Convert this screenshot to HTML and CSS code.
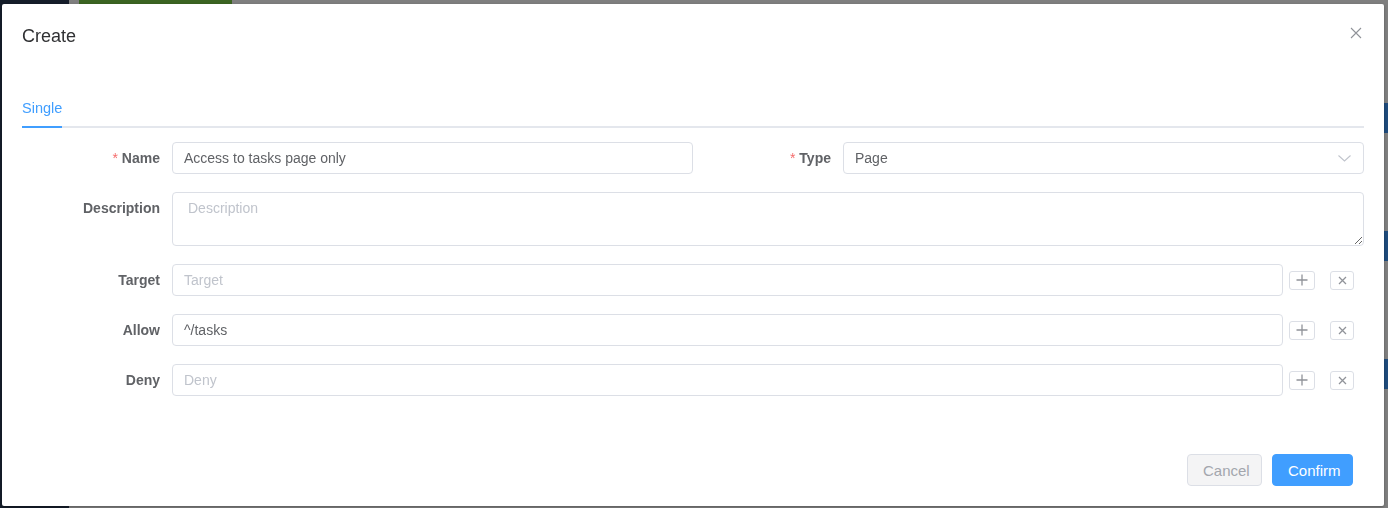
FILE: index.html
```html
<!DOCTYPE html>
<html>
<head>
    <title>Create</title>
    <link rel="stylesheet" href="styles.css">
</head>
<body>
<div class="page">
    <aside class="sidebar"></aside>
    <div class="content">
        <div class="topbar"><span class="topbar-active"></span></div>
        <div class="rows">
            <div class="band"></div>
            <div class="band"></div>
            <div class="band"></div>
        </div>
    </div>
</div>

<div class="mask">
    <div class="dialog">
        <div class="dialog-header">
            <span class="dialog-title">Create</span>
            <button class="dialog-close" title="Close">
                <svg width="12" height="12" viewBox="0 0 12 12"><path d="M1 1L11 11M11 1L1 11" stroke="#909399" stroke-width="1.1" fill="none"/></svg>
            </button>
        </div>
        <div class="dialog-body">
            <div class="tabs">
                <div class="tab active">Single</div>
            </div>
            <form class="form">
                <div class="form-row">
                    <div class="form-col">
                        <div class="form-item">
                            <label class="form-label required">Name</label>
                            <div class="form-content">
                                <input class="input" type="text" value="Access to tasks page only">
                            </div>
                        </div>
                    </div>
                    <div class="form-col">
                        <div class="form-item">
                            <label class="form-label required">Type</label>
                            <div class="form-content">
                                <div class="select">
                                    <input class="input" type="text" value="Page" readonly>
                                    <svg class="select-arrow" width="13" height="7" viewBox="0 0 13 7"><path d="M0.5 0.5L6.5 6L12.5 0.5" stroke="#c0c4cc" stroke-width="1.1" fill="none"/></svg>
                                </div>
                            </div>
                        </div>
                    </div>
                </div>
                <div class="form-item">
                    <label class="form-label">Description</label>
                    <div class="form-content">
                        <textarea class="textarea" rows="2" placeholder="Description"></textarea>
                    </div>
                </div>
                <div class="form-item">
                    <label class="form-label">Target</label>
                    <div class="form-content with-actions">
                        <input class="input" type="text" placeholder="Target">
                        <div class="actions">
                            <button type="button" class="mini-btn add"><svg width="12" height="12" viewBox="0 0 12 12"><path d="M6 0.5V11.5M0.5 6H11.5" stroke="#909399" stroke-width="1.3"/></svg></button>
                            <button type="button" class="mini-btn remove"><svg width="9" height="9" viewBox="0 0 9 9"><path d="M1 1L8 8M8 1L1 8" stroke="#909399" stroke-width="1.3"/></svg></button>
                        </div>
                    </div>
                </div>
                <div class="form-item">
                    <label class="form-label">Allow</label>
                    <div class="form-content with-actions">
                        <input class="input" type="text" value="^/tasks">
                        <div class="actions">
                            <button type="button" class="mini-btn add"><svg width="12" height="12" viewBox="0 0 12 12"><path d="M6 0.5V11.5M0.5 6H11.5" stroke="#909399" stroke-width="1.3"/></svg></button>
                            <button type="button" class="mini-btn remove"><svg width="9" height="9" viewBox="0 0 9 9"><path d="M1 1L8 8M8 1L1 8" stroke="#909399" stroke-width="1.3"/></svg></button>
                        </div>
                    </div>
                </div>
                <div class="form-item">
                    <label class="form-label">Deny</label>
                    <div class="form-content with-actions">
                        <input class="input" type="text" placeholder="Deny">
                        <div class="actions">
                            <button type="button" class="mini-btn add"><svg width="12" height="12" viewBox="0 0 12 12"><path d="M6 0.5V11.5M0.5 6H11.5" stroke="#909399" stroke-width="1.3"/></svg></button>
                            <button type="button" class="mini-btn remove"><svg width="9" height="9" viewBox="0 0 9 9"><path d="M1 1L8 8M8 1L1 8" stroke="#909399" stroke-width="1.3"/></svg></button>
                        </div>
                    </div>
                </div>
            </form>
        </div>
        <div class="dialog-footer">
            <button type="button" class="btn btn-default">Cancel</button>
            <button type="button" class="btn btn-primary">Confirm</button>
        </div>
    </div>
</div>
</body>
</html>
```

FILE: styles.css
```css
html, body {
    margin: 0;
    height: 100%;
    overflow: hidden;
}
body {
    font-family: "Liberation Sans", Arial, sans-serif;
    font-size: 14px;
    color: #606266;
    background: #7f7f7f;
}
.page {
    display: flex;
    height: 100%;
}
.sidebar {
    width: 69px;
    background: #151d2a;
}
.content {
    flex: 1;
    display: flex;
    flex-direction: column;
}
.topbar {
    height: 4px;
    padding-left: 10px;
    background: #7f7f7f;
}
.topbar-active {
    display: block;
    width: 153px;
    height: 4px;
    background: #3b6422;
}
.rows {
    padding-top: 99px;
    display: flex;
    flex-direction: column;
    align-items: flex-end;
    row-gap: 98px;
}
.band {
    width: 100%;
    height: 30px;
    background: #1f4b7c;
}

/* dialog */
.mask {
    position: fixed;
    inset: 0;
}
.dialog {
    position: absolute;
    left: 2px;
    top: 4px;
    width: 1382px;
    height: 502px;
    background: #fff;
    border-radius: 2px;
    box-shadow: 0 1px 3px rgba(0, 0, 0, .3);
    box-sizing: border-box;
    display: flex;
    flex-direction: column;
}
.dialog-header {
    padding: 20px 20px 10px;
    position: relative;
}
.dialog-title {
    font-size: 18px;
    line-height: 24px;
    color: #303133;
}
.dialog-close {
    position: absolute;
    top: 23px;
    right: 22px;
    padding: 0;
    border: 0;
    background: none;
    width: 12px;
    height: 12px;
    display: flex;
}
.dialog-body {
    padding: 30px 20px;
    flex: 1;
}
.tabs {
    height: 40px;
    box-sizing: border-box;
    display: flex;
    border-bottom: 2px solid #e4e7ed;
    margin-bottom: 14px;
}
.tab {
    line-height: 40px;
    height: 40px;
    box-sizing: border-box;
    font-size: 14.5px;
    color: #303133;
}
.tab.active {
    color: #409eff;
    line-height: 40px;
    border-bottom: 2px solid #409eff;
}

/* form */
.form-row {
    display: flex;
}
.form-col {
    flex: 1;
}
.form-item {
    display: flex;
    margin-bottom: 18px;
}
.form-label {
    width: 150px;
    flex: none;
    box-sizing: border-box;
    padding-right: 12px;
    text-align: right;
    line-height: 32px;
    font-weight: bold;
    color: #606266;
}
.form-label.required::before {
    content: "*";
    color: #f56c6c;
    margin-right: 4px;
    font-weight: normal;
}
.form-content {
    flex: 1;
    min-width: 0;
}
.with-actions {
    display: flex;
    align-items: center;
}
.input {
    display: block;
    width: 100%;
    height: 32px;
    box-sizing: border-box;
    padding: 0 11px;
    border: 1px solid #dcdfe6;
    border-radius: 4px;
    font: inherit;
    font-size: 14px;
    color: #606266;
    outline: none;
}
.input::placeholder,
.textarea::placeholder {
    color: #c0c4cc;
}
.select {
    position: relative;
}
.select-arrow {
    position: absolute;
    right: 13px;
    top: 13px;
}
.textarea {
    display: block;
    width: 100%;
    height: 54px;
    box-sizing: border-box;
    padding: 5px 15px;
    border: 1px solid #dcdfe6;
    border-radius: 4px;
    font: inherit;
    font-size: 14px;
    line-height: 1.5;
    color: #606266;
    resize: vertical;
    outline: none;
}
.actions {
    flex: none;
    display: flex;
    align-items: center;
    column-gap: 15px;
    padding: 0 10px 0 6px;
}
.mini-btn {
    height: 19px;
    padding: 0;
    border: 1px solid #dcdfe6;
    border-radius: 3px;
    background: #fff;
    display: flex;
    align-items: center;
    justify-content: center;
}
.mini-btn.add {
    width: 26px;
}
.mini-btn.remove {
    width: 24px;
}

/* footer */
.dialog-footer {
    padding: 10px 31px 20px 20px;
    display: flex;
    justify-content: flex-end;
    column-gap: 10px;
}
.btn {
    height: 32px;
    padding: 0 15px;
    border-radius: 4px;
    font: inherit;
    font-size: 15px;
    box-sizing: border-box;
}
.btn-default {
    width: 75px;
    background: #f4f4f5;
    border: 1px solid #dcdfe6;
    color: #a3a6ad;
}
.btn-primary {
    width: 81px;
    background: #409eff;
    border: 1px solid #409eff;
    color: #fff;
}
```
